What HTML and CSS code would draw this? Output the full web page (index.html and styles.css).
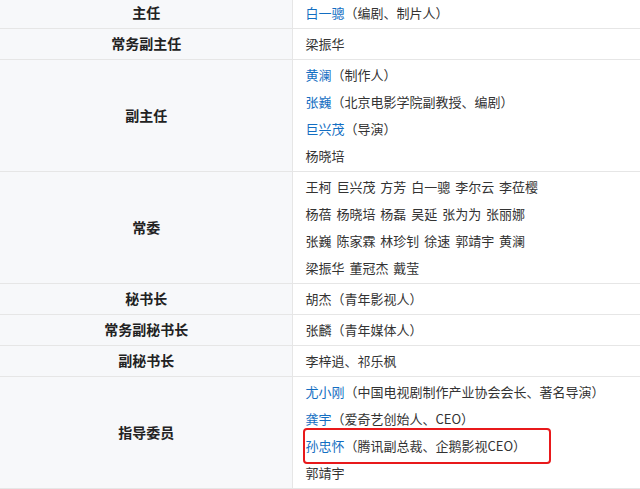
FILE: index.html
```html
<!DOCTYPE html>
<html lang="zh-CN">
<head>
  <meta charset="UTF-8">
  <title>组织架构</title>
  <link rel="stylesheet" href="styles.css">
</head>
<body>

<div class="wrap">
  <table class="org">
    <tbody>
      <tr>
        <th>主任</th>
        <td><a href="#">白一骢</a>（编剧、制片人）</td>
      </tr>
      <tr>
        <th>常务副主任</th>
        <td>梁振华</td>
      </tr>
      <tr>
        <th>副主任</th>
        <td>
          <div><a href="#">黄澜</a>（制作人）</div>
          <div><a href="#">张巍</a>（北京电影学院副教授、编剧）</div>
          <div><a href="#">巨兴茂</a>（导演）</div>
          <div>杨晓培</div>
        </td>
      </tr>
      <tr>
        <th>常委</th>
        <td class="names">
          <div>王柯 巨兴茂 方芳 白一骢 李尔云 李莅樱</div>
          <div>杨蓓 杨晓培 杨磊 吴延 张为为 张丽娜</div>
          <div>张巍 陈家霖 林珍钊 徐速 郭靖宇 黄澜</div>
          <div>梁振华 董冠杰 戴莹</div>
        </td>
      </tr>
      <tr>
        <th>秘书长</th>
        <td>胡杰（青年影视人）</td>
      </tr>
      <tr>
        <th>常务副秘书长</th>
        <td>张麟（青年媒体人）</td>
      </tr>
      <tr>
        <th>副秘书长</th>
        <td>李梓逍、祁乐枫</td>
      </tr>
      <tr>
        <th>指导委员</th>
        <td>
          <div><a href="#">尤小刚</a>（中国电视剧制作产业协会会长、著名导演）</div>
          <div><a href="#">龚宇</a>（爱奇艺创始人、CEO）</div>
          <div class="marked"><a href="#">孙忠怀</a>（腾讯副总裁、企鹅影视CEO）<span class="ring"></span></div>
          <div>郭靖宇</div>
        </td>
      </tr>
    </tbody>
  </table>
</div>

</body>
</html>
```

FILE: styles.css
```css
* {
  box-sizing: border-box;
}
html, body {
  margin: 0;
  padding: 0;
  background: #fff;
  overflow: hidden;
}
body {
  font-family: "Noto Sans CJK SC", "Liberation Sans", sans-serif;
  font-size: 13px;
  color: #333;
}
.wrap {
  margin-top: -3px;
}
.org {
  width: 100%;
  border-collapse: collapse;
}
.org th,
.org td {
  border: 1px solid #e6e6e6;
  padding: 1px 12px 2px 13px;
  line-height: 27px;
  vertical-align: middle;
}
.org th {
  width: 292px;
  background: #f7f8fa;
  font-weight: bold;
  font-size: 14px;
  text-align: center;
  color: #222;
  border-left: none;
}
.org td {
  text-align: left;
  border-right: none;
}
.org .names {
  word-spacing: 2px;
}
.org a {
  color: #136ec2;
  text-decoration: none;
}
.marked {
  position: relative;
}
.ring {
  position: absolute;
  left: -3px;
  top: -4px;
  width: 248px;
  height: 36px;
  border: 2.5px solid #e8191b;
  border-radius: 4px;
}
```
